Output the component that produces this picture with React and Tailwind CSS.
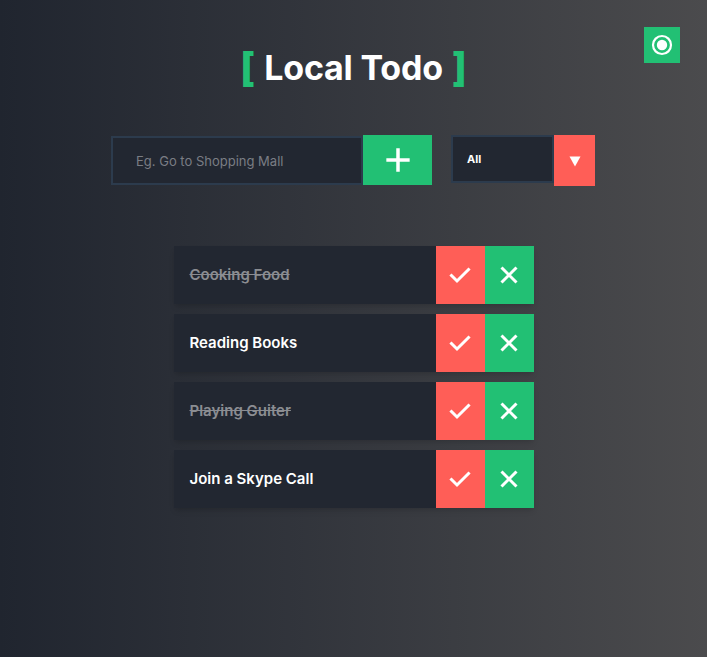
import React, { useState } from "react";

const todos = [
  { id: 1, text: "Cooking Food", completed: true },
  { id: 2, text: "Reading Books", completed: false },
  { id: 3, text: "Playing Guiter", completed: true },
  { id: 4, text: "Join a Skype Call", completed: false },
];

const CheckIcon = () => (
  <svg className="w-6 h-6" viewBox="0 0 24 24" fill="none" stroke="white" strokeWidth={3}>
    <path d="M3.5 12.5l5.5 5.5L20.5 6.5" strokeLinecap="square" />
  </svg>
);

const CrossIcon = () => (
  <svg className="w-6 h-6" viewBox="0 0 24 24" fill="none" stroke="white" strokeWidth={3}>
    <path d="M4.5 4.5l15 15M19.5 4.5l-15 15" />
  </svg>
);

const App = () => {
  const [filter] = useState("All");

  return (
    <div
      className="relative min-h-screen w-full bg-gradient-to-r from-[#20252f] to-[#4b4b4d] text-white"
      style={{ fontFamily: "Inter, 'Noto Sans', sans-serif" }}
    >
      <button className="absolute top-[27px] right-[27px] w-9 h-9 bg-[#22c074] flex items-center justify-center">
        <svg className="w-6 h-6" viewBox="0 0 24 24" fill="none">
          <circle cx="12" cy="12" r="9" stroke="white" strokeWidth="2.2" />
          <circle cx="12" cy="12" r="5.2" fill="white" />
        </svg>
      </button>

      <header className="pt-[44px] flex justify-center">
        <h1 className="text-[34px] leading-[48px] font-bold tracking-[-0.2px] flex items-center">
          <span className="text-[#22c074] mr-[9px] text-[40px] font-extrabold">[</span>
          Local Todo
          <span className="text-[#22c074] ml-[9px] text-[40px] font-extrabold">]</span>
        </h1>
      </header>

      <form className="mt-[43px] flex justify-center pr-[1px]" onSubmit={(e) => e.preventDefault()}>
        <div className="flex">
          <input
            type="text"
            placeholder="Eg. Go to Shopping Mall"
            className="w-[252px] h-[49px] mt-[1px] bg-[#222731] border-2 border-[#2c3b4d] pl-[23px] text-[13px] text-white placeholder:text-[#7a7d84] outline-none"
          />
          <button className="w-[69px] h-[50px] bg-[#22c074] flex items-center justify-center">
            <svg className="w-7 h-7" viewBox="0 0 24 24" fill="none" stroke="white" strokeWidth={3}>
              <path d="M12 2v20M2 12h20" />
            </svg>
          </button>
        </div>
        <div className="ml-[19px] flex">
          <div className="w-[103px] h-[48px] bg-[#222731] border-2 border-[#2c3b4d] flex items-center pl-[14px] text-[11px] font-bold">
            {filter}
          </div>
          <div className="w-[41px] h-[51px] bg-[#ff5e57] flex items-center justify-center">
            <svg className="w-3 h-3" viewBox="0 0 12 12" fill="white">
              <path d="M0.5 1.5h11L6 11.5z" />
            </svg>
          </div>
        </div>
      </form>

      <ul className="mt-[60px] flex flex-col items-center gap-[10px]">
        {todos.map((todo) => (
          <li key={todo.id} className="w-[360px] h-[58px] flex bg-[#222731] shadow-md">
            <span
              className={`flex-1 flex items-center pl-4 text-[15px] font-semibold ${
                todo.completed ? "line-through text-[#8b8d92]" : "text-white"
              }`}
            >
              {todo.text}
            </span>
            <button className="w-[49px] h-full bg-[#ff5e57] flex items-center justify-center">
              <CheckIcon />
            </button>
            <button className="w-[49px] h-full bg-[#22c074] flex items-center justify-center">
              <CrossIcon />
            </button>
          </li>
        ))}
      </ul>
    </div>
  );
};

export default App;
